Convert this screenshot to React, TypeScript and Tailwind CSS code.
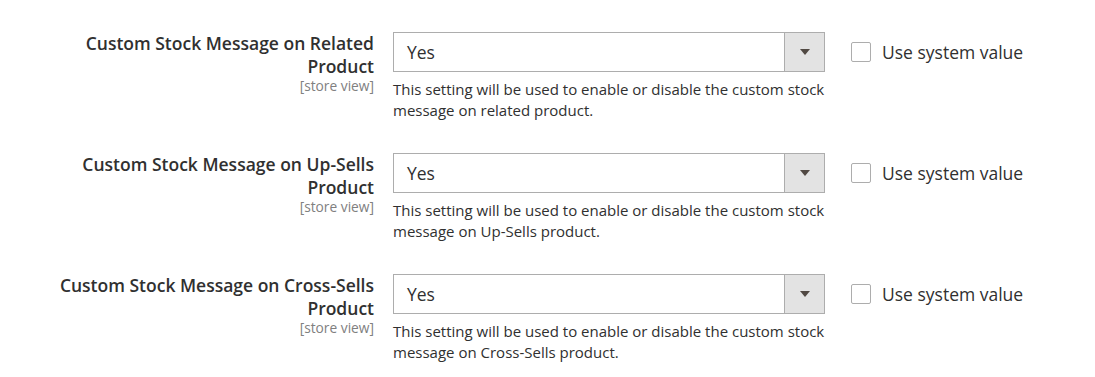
import React from "react";

const rows = [
  {
    label: ["Custom Stock Message on Related", "Product"],
    help: ["This setting will be used to enable or disable the custom stock", "message on related product."],
  },
  {
    label: ["Custom Stock Message on Up-Sells", "Product"],
    help: ["This setting will be used to enable or disable the custom stock", "message on Up-Sells product."],
  },
  {
    label: ["Custom Stock Message on Cross-Sells", "Product"],
    help: ["This setting will be used to enable or disable the custom stock", "message on Cross-Sells product."],
  },
];

function ConfigRow({ label, help }: { label: string[]; help: string[] }) {
  return (
    <div className="flex">
      <div className="w-[374px] shrink-0 text-right">
        <div className="text-[17.5px] font-semibold leading-[23px] text-[#303030]">
          {label[0]}
          <br />
          {label[1]}
        </div>
        <div className="text-[13.75px] leading-[16px] text-[#808080]">[store view]</div>
      </div>
      <div className="ml-[19px] w-[432px] shrink-0">
        <div className="flex h-[40px] border border-[#adadad] bg-white">
          <div className="flex flex-1 items-center pl-[13px] text-[17.5px] text-[#303030]">Yes</div>
          <div className="flex w-[40px] items-center justify-center border-l border-[#adadad] bg-[#e3e3e3]">
            <svg width="10" height="6" viewBox="0 0 10 6">
              <path d="M0 0 L10 0 L5 6 Z" fill="#514943" />
            </svg>
          </div>
        </div>
        <div className="mt-[7px] text-[15px] leading-[21px] text-[#303030]">
          {help[0]}
          <br />
          {help[1]}
        </div>
      </div>
      <div className="ml-[26px] flex h-[40px] items-center gap-[11px]">
        <span className="h-[20px] w-[20px] rounded-[2px] border border-[#adadad] bg-white" />
        <span className="text-[17.5px] text-[#303030]">Use system value</span>
      </div>
    </div>
  );
}

export default function App() {
  return (
    <div
      className="h-[377px] w-[1095px] overflow-hidden bg-white pt-[32px]"
      style={{ fontFamily: '"Open Sans", "Noto Sans", sans-serif' }}
    >
      <div className="flex flex-col gap-[32px]">
        {rows.map((r, i) => (
          <ConfigRow key={i} label={r.label} help={r.help} />
        ))}
      </div>
    </div>
  );
}
